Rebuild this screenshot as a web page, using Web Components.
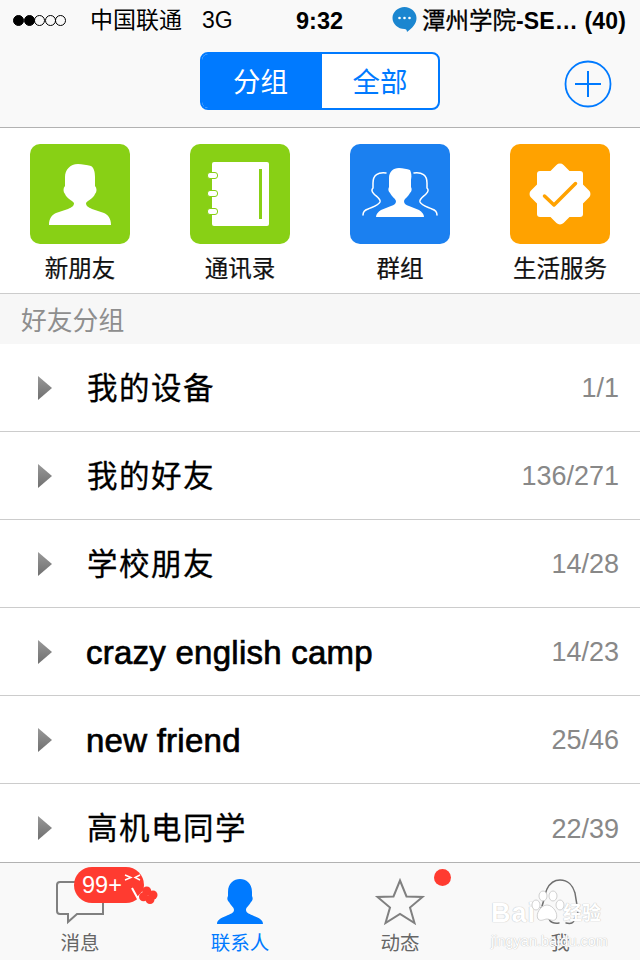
<!DOCTYPE html>
<html lang="zh">
<head>
<meta charset="UTF-8" />
<title>联系人</title>
<style>
    * { box-sizing: border-box; }
    html, body { margin: 0; height: 100%; }
    body {
        width: 640px;
        height: 960px;
        overflow: hidden;
        display: flex;
        flex-direction: column;
        background: #fff;
        color: #000;
        font-family: "Liberation Sans", "Noto Sans CJK SC", sans-serif;
    }
</style>
</head>
<body>
    <status-bar></status-bar>
    <nav-header></nav-header>
    <shortcut-grid>
        <shortcut-item label="新朋友" color="#88d015" icon="person"></shortcut-item>
        <shortcut-item label="通讯录" color="#88d015" icon="book"></shortcut-item>
        <shortcut-item label="群组" color="#1b80f0" icon="group"></shortcut-item>
        <shortcut-item label="生活服务" color="#ffa200" icon="badge"></shortcut-item>
    </shortcut-grid>
    <section-label>好友分组</section-label>
    <group-list>
        <group-row count="1/1">我的设备</group-row>
        <group-row count="136/271">我的好友</group-row>
        <group-row count="14/28">学校朋友</group-row>
        <group-row count="14/23" latin>crazy english camp</group-row>
        <group-row count="25/46" latin>new friend</group-row>
        <group-row count="22/39" last>高机电同学</group-row>
    </group-list>
    <tab-bar>
        <tab-item label="消息" icon="chat"></tab-item>
        <tab-item label="联系人" icon="contact" active></tab-item>
        <tab-item label="动态" icon="star"></tab-item>
        <tab-item label="我" icon="penguin"></tab-item>
    </tab-bar>

<script>
    const PERSON = 'M48 20C52 20 57 21 61 22C64 24 65 28 65 33L65 42C67 44 67 48 65 50C63 55 58 56 56 59C56 62 58 63 62 65L74 69C78 71 81 74 81 81L19 81C19 74 22 71 26 69L38 65C42 63 44 62 44 59C42 56 37 55 35 50C33 48 33 44 35 42L35 33C35 26 40 20 48 20Z';

    const SHORTCUT_ICONS = {
        person: `<path d="${PERSON}" fill="#fff"/>`,
        book: `<rect x="22" y="18" width="57" height="64" rx="2" fill="#fff"/>
            <rect x="69" y="25" width="3" height="50" fill="#88d015"/>
            <g fill="#fff" stroke="#88d015" stroke-width="1">
                <rect x="17.5" y="28.5" width="10" height="6" rx="2.5"/>
                <rect x="17.5" y="46.5" width="10" height="6" rx="2.5"/>
                <rect x="17.5" y="64.5" width="10" height="6" rx="2.5"/>
            </g>`,
        group: `<path d="M49 24C53 24 57 25 60 26C61 28 62 31 61 36L61 43C62 45 62 47 60 49C58 53 55 54 54 57C54 60 56 61 59 62L69 66C72 68 74 70 74 73L26 73C26 70 28 68 31 66L41 62C44 61 46 60 46 57C45 54 42 53 40 49C38 47 38 45 39 43L39 34C39 28 43 24 49 24Z" fill="#fff"/>
            <g fill="none" stroke="#fff" stroke-width="1.5" stroke-linecap="round">
                <path d="M36 29C28 28 23 31 23 39L23 44C21 46 22 48 24 50C27 53 31 55 30 58C28 62 22 63 18 65C15 66 13 68 13 71"/>
                <path d="M64 29C72 28 77 31 77 39L77 44C79 46 78 48 76 50C73 53 69 55 70 58C72 62 78 63 82 65C85 66 87 68 87 71"/>
            </g>`,
        badge: `<rect x="27" y="27" width="46" height="46" rx="3" fill="#fff"/>
            <rect x="27" y="27" width="46" height="46" rx="5" fill="#fff" transform="rotate(45 50 50)"/>
            <path d="M34.500 52L44 61L65.500 39.500" fill="none" stroke="#ffa200" stroke-width="3.500" stroke-linecap="round" stroke-linejoin="round"/>`
    };

    const TAB_ICONS = {
        chat: `<path d="M4 3H47V35H21L12 43V35H4C2 35 1 34 1 32V6C1 4 2 3 4 3Z" fill="none" stroke="#808080" stroke-width="2"/>`,
        contact: `<path transform="translate(1 0)" d="M23 0C29 0 35 4 35 13L35 17C36 19 36 21 34 23C32 27 29 28 29 31C29 34 33 35 37 37C42 39 46 41 46 45L0 45C0 41 4 39 9 37C13 35 17 34 17 31C17 28 14 27 12 23C10 21 10 19 11 17L11 13C11 4 17 0 23 0Z" fill="#007aff"/>`,
        star: `<path d="M24 1.500L30.500 17.500L46.500 18L34 28.500L38.500 44L24 35L9.500 44L14 28.500L1.500 18L17.500 17.500Z" fill="none" stroke="#808080" stroke-width="2"/>`,
        penguin: `<path d="M6 27C8 22 9 14 11 10C14 4 19 1 24 1C32 1 37 7 39 14C40 20 41 27 42 31M5 29C8 28 11 30 10 33C9 36 12 38 13 40C14 43 18 45 23 44M30 44C35 45 38 44 38 41C39 38 41 36 42 33" fill="none" stroke="#707070" stroke-width="1.500" stroke-linecap="round"/>`
    };

    // 顶部状态栏
    class StatusBar extends HTMLElement {
        connectedCallback() {
            const root = this.attachShadow({ mode: 'open' });
            root.innerHTML = `
            <style>
                * { box-sizing: border-box; }
                :host { display: flex; align-items: center; height: 40px; flex: none; background: #f9f9f9; padding-left: 13px; font-size: 23px; white-space: nowrap; }
                .dots { display: flex; width: 77px; }
                .dots i { flex: none; width: 11px; height: 11px; margin-right: -.5px; border-radius: 50%; border: 1px solid #000; }
                .dots i.on { background: #000; }
                .carrier { width: 112px; padding-bottom: 4px; }
                .net { width: 94px; }
                .time { width: 96px; padding-top: 2px; font-weight: bold; font-size: 23.500px; }
                svg { width: 25px; height: 28px; margin-right: 5px; flex: none; }
                .chat { padding-top: 1px; font-weight: bold; letter-spacing: .15px; line-height: 28px; }
                .chat span { font-weight: normal; letter-spacing: 0; font-size: 23.500px; -webkit-text-stroke: 0.3px #000; }
            </style>
            <div class="dots"><i class="on"></i><i class="on"></i><i></i><i></i><i></i></div>
            <div class="carrier">中国联通</div>
            <div class="net">3G</div>
            <div class="time">9:32</div>
            <svg viewBox="0 0 25 28"><path d="M12.500 1C19 1 24.500 6 24.500 12C24.500 18 20 22 15 26C15 24 14 23 12.500 23C6 23 .5 18 .5 12C.5 6 6 1 12.500 1Z" fill="#1b86d0"/><circle cx="7.500" cy="12" r="1.300" fill="#fff"/><circle cx="12.500" cy="12" r="1.300" fill="#fff"/><circle cx="17.500" cy="12" r="1.300" fill="#fff"/></svg>
            <div class="chat"><span>潭州学院</span>-SE… (40)</div>`;
        }
    }

    // 分组/全部 切换和加号
    class NavHeader extends HTMLElement {
        connectedCallback() {
            const root = this.attachShadow({ mode: 'open' });
            root.innerHTML = `
            <style>
                * { box-sizing: border-box; }
                :host { display: flex; align-items: flex-start; flex: none; height: 88px; padding: 12px 0 0 200px; background: #f9f9f9; border-bottom: 1px solid #b2b2b2; }
                .seg { display: flex; width: 240px; height: 58px; border: 2px solid #007aff; border-radius: 8px; overflow: hidden; background: #fff; font-size: 27.500px; color: #007aff; }
                .seg div { display: flex; align-items: center; justify-content: center; padding-bottom: 2px; }
                .seg .on { width: 120px; padding-right: 3px; background: #007aff; color: #fff; }
                .seg .off { flex: 1; }
                svg { width: 48px; height: 48px; margin: 8px 0 0 124px; }
            </style>
            <div class="seg"><div class="on">分组</div><div class="off">全部</div></div>
            <svg viewBox="0 0 48 48" fill="none" stroke="#007aff"><circle cx="24" cy="24" r="22.500" stroke-width="1.800"/><path d="M24 11V37M11 24H37" stroke-width="2"/></svg>`;
        }
    }

    class ShortcutGrid extends HTMLElement {
        connectedCallback() {
            const root = this.attachShadow({ mode: 'open' });
            root.innerHTML = `
            <style>
                :host { display: grid; grid-template-columns: repeat(4, 160px); flex: none; height: 166px; padding-top: 16px; background: #fff; border-bottom: 1px solid #ccc; }
            </style>
            <slot></slot>`;
        }
    }

    class ShortcutItem extends HTMLElement {
        connectedCallback() {
            const root = this.attachShadow({ mode: 'open' });
            const color = this.getAttribute('color');
            root.innerHTML = `
            <style>
                :host { display: flex; flex-direction: column; align-items: center; }
                .tile { width: 100px; height: 100px; border-radius: 10px; background: ${color}; }
                svg { display: block; width: 100px; height: 100px; }
                .label { margin-top: 9px; font-size: 23.500px; line-height: 32px; color: #111; -webkit-text-stroke: 0.2px #111; }
            </style>
            <div class="tile"><svg viewBox="0 0 100 100">${SHORTCUT_ICONS[this.getAttribute('icon')]}</svg></div>
            <div class="label">${this.getAttribute('label')}</div>`;
        }
    }

    class SectionLabel extends HTMLElement {
        connectedCallback() {
            const root = this.attachShadow({ mode: 'open' });
            root.innerHTML = `
            <style>
                :host { display: flex; align-items: center; flex: none; height: 50px; padding: 0 0 2px 21px; background: #f7f7f7; font-size: 25.800px; color: #8e8e8e; }
            </style>
            <slot></slot>`;
        }
    }

    class GroupList extends HTMLElement {
        connectedCallback() {
            const root = this.attachShadow({ mode: 'open' });
            root.innerHTML = `
            <style>
                :host { display: block; flex: 1; min-height: 0; overflow: hidden; background: #fff; }
            </style>
            <slot></slot>`;
        }
    }

    // 好友分组的一行
    class GroupRow extends HTMLElement {
        connectedCallback() {
            const root = this.attachShadow({ mode: 'open' });
            root.innerHTML = `
            <style>
                :host { display: flex; align-items: center; height: 88px; padding: 0 21px 0 38px; border-bottom: 1px solid #ccc; }
                :host([last]) { border-bottom: 0; }
                svg { width: 15px; height: 24px; flex: none; margin-right: 34px; }
                .name { flex: 1; padding-bottom: 4px; font-size: 30.500px; letter-spacing: 1.500px; color: #000; -webkit-text-stroke: 0.3px #000; }
                :host([latin]) .name { padding: 2px 0 0; font-size: 33px; letter-spacing: .25px; margin-left: -1px; -webkit-text-stroke: 0.7px #000; }
                .count { padding-top: 2px; font-size: 27px; color: #888; }
            </style>
            <svg viewBox="0 0 15 24"><defs><linearGradient id="g" x1="0" y1="0" x2="0" y2="1"><stop offset="0" stop-color="#999"/><stop offset="1" stop-color="#6f6f6f"/></linearGradient></defs><path d="M0 0L14 12L0 24Z" fill="url(#g)"/></svg>
            <div class="name"><slot></slot></div>
            <div class="count">${this.getAttribute('count')}</div>`;
        }
    }

    class TabBar extends HTMLElement {
        connectedCallback() {
            const root = this.attachShadow({ mode: 'open' });
            root.innerHTML = `
            <style>
                :host { position: relative; display: grid; grid-template-columns: repeat(4, 160px); flex: none; height: 98px; background: #f9f9f9; border-top: 1px solid #b2b2b2; }
                .mark { position: absolute; left: 491px; top: 26px; width: 118px; color: #fff; pointer-events: none; text-shadow: 0 0 1px #c4c4c4, 0 0 1px #c4c4c4; }
                .top { display: flex; align-items: flex-end; height: 39px; }
                .top b { font-size: 27px; line-height: 30px; letter-spacing: 1px; width: 37px; }
                .top span { font-size: 19px; line-height: 28px; font-weight: bold; margin-left: 2px; }
                svg { width: 36px; height: 34px; margin: 0 -4px 4px 1px; flex: none; }
                .url { font-size: 14.500px; line-height: 16px; margin-top: 5px; white-space: nowrap; }
            </style>
            <slot></slot>
            <div class="mark">
                <div class="top"><b>Bai</b><svg viewBox="0 0 36 34" fill="#fff" stroke="#c4c4c4" stroke-width=".8"><ellipse cx="7" cy="15" rx="4" ry="5"/><ellipse cx="14" cy="6" rx="4" ry="5"/><ellipse cx="24" cy="6" rx="4" ry="5"/><ellipse cx="31" cy="15" rx="4" ry="5"/><path d="M18 15C24 15 30 24 27 29C24 32 21 29 18 29C15 29 12 32 9 29C6 24 12 15 18 15Z"/></svg><span>经验</span></div>
                <div class="url">jingyan.baidu.com</div>
            </div>`;
        }
    }

    class TabItem extends HTMLElement {
        connectedCallback() {
            const root = this.attachShadow({ mode: 'open' });
            const icon = this.getAttribute('icon');
            const badge = icon === 'chat' ? `
                <div class="badge">99+</div>
                <svg class="bits" viewBox="0 0 90 40">
                    <path d="M58 21L63.500 31L70 24" fill="none" stroke="#fff" stroke-width="2"/>
                    <g fill="#ff3b30"><circle cx="72.700" cy="24" r="4.500"/><circle cx="79" cy="28" r="4.500"/><circle cx="76" cy="32.500" r="4.500"/><circle cx="69.500" cy="29.700" r="4.500"/></g>
                    <path d="M51 8L57 10.500L51 13M66 8L61 10.500L66 13" fill="none" stroke="#fff" stroke-width="1.400"/>
                </svg>` : '';
            const dot = icon === 'star' ? '<div class="dot"></div>' : '';
            root.innerHTML = `
            <style>
                * { box-sizing: border-box; }
                :host { position: relative; display: flex; flex-direction: column; align-items: center; padding-top: 16px; color: #666; }
                :host([active]) { color: #007aff; }
                .icon { display: block; width: 48px; height: 46px; overflow: visible; }
                .label { margin-top: 5px; font-size: 19.500px; line-height: 26px; }
                .badge { position: absolute; left: 74px; top: 4px; width: 70px; height: 36px; padding-left: 8px; border-radius: 18px; background: #ff3b30; color: #fff; font-size: 23.500px; line-height: 36px; }
                .bits { position: absolute; left: 74px; top: 4px; width: 90px; height: 40px; }
                .dot { position: absolute; left: 113.500px; top: 5.500px; width: 17px; height: 17px; border-radius: 50%; background: #ff3b30; }
            </style>
            <svg class="icon" viewBox="0 0 48 46">${TAB_ICONS[icon]}</svg>
            <div class="label">${this.getAttribute('label')}</div>
            ${badge}${dot}`;
        }
    }

    customElements.define('status-bar', StatusBar);
    customElements.define('nav-header', NavHeader);
    customElements.define('shortcut-grid', ShortcutGrid);
    customElements.define('shortcut-item', ShortcutItem);
    customElements.define('section-label', SectionLabel);
    customElements.define('group-list', GroupList);
    customElements.define('group-row', GroupRow);
    customElements.define('tab-bar', TabBar);
    customElements.define('tab-item', TabItem);
</script>
</body>
</html>
